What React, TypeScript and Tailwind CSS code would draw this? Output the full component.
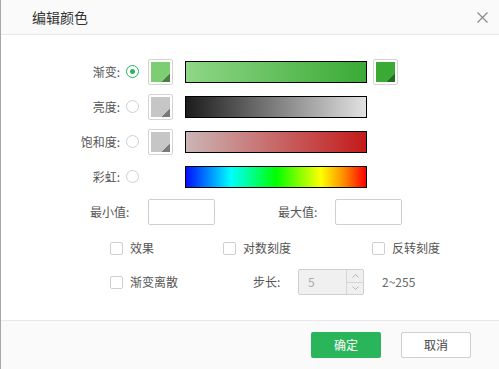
import React from "react";

const font = { fontFamily: '"Noto Sans CJK SC", "Liberation Sans", sans-serif' };

function Radio({ checked }: { checked?: boolean }) {
  return checked ? (
    <div className="ml-[6px] flex h-[13px] w-[13px] items-center justify-center rounded-full border border-[#2ab55b]">
      <div className="h-[5px] w-[5px] rounded-full bg-[#2ab55b]" />
    </div>
  ) : (
    <div className="ml-[6px] h-[13px] w-[13px] rounded-full border border-[#cfcfcf]" />
  );
}

function Swatch({ fill, tri, className }: { fill: string; tri: string; className?: string }) {
  return (
    <div className={"h-[26px] w-[25px] rounded-[2px] border border-[#d4d4d4] bg-white p-[2px] " + (className ?? "")}>
      <div className="relative h-full w-full" style={{ background: fill }}>
        <div
          className="absolute bottom-0 right-0 h-[8px] w-[8px]"
          style={{ background: `linear-gradient(135deg, transparent 50%, ${tri} 50%)` }}
        />
      </div>
    </div>
  );
}

function Bar({ bg }: { bg: string }) {
  return <div className="ml-[12px] h-[22px] w-[182px] border border-black" style={{ background: bg }} />;
}

function Check({ label, className }: { label: string; className?: string }) {
  return (
    <div className={"flex items-center " + (className ?? "")}>
      <div className="h-[13px] w-[13px] rounded-[2px] border border-[#cfcfcf] bg-white" />
      <span className="ml-[7px] text-[12px] text-[#555]">{label}</span>
    </div>
  );
}

export default function App() {
  return (
    <div className="flex h-[369px] w-[499px] flex-col border-l border-[#a6a6a6] bg-white" style={font}>
      <div className="flex h-[35px] items-center border-b border-[#e8e8e8] bg-[#fafafa] pl-[31px] pr-[11px]">
        <span className="text-[14px] text-[#333]">编辑颜色</span>
        <svg className="ml-auto" width="11" height="11" viewBox="0 0 11 11">
          <path d="M0.5 0.5 L10.5 10.5 M10.5 0.5 L0.5 10.5" stroke="#8a8a8a" strokeWidth="1.2" />
        </svg>
      </div>

      <div className="flex flex-1 flex-col pt-[19px]">
        <div className="flex h-[35px] items-center">
          <span className="w-[119px] text-right text-[12px] text-[#555]">渐变:</span>
          <Radio checked />
          <Swatch className="ml-[9px]" fill="#7dce73" tri="#4e7d47" />
          <Bar bg="linear-gradient(to right, #8fd787, #3aaa35)" />
          <Swatch className="ml-[6px]" fill="#3aaa35" tri="#226c1f" />
        </div>
        <div className="flex h-[35px] items-center">
          <span className="w-[119px] text-right text-[12px] text-[#555]">亮度:</span>
          <Radio />
          <Swatch className="ml-[9px]" fill="#c6c6c6" tri="#7a7a7a" />
          <Bar bg="linear-gradient(to right, #1c1c1c, #e2e2e2)" />
        </div>
        <div className="flex h-[35px] items-center">
          <span className="w-[119px] text-right text-[12px] text-[#555]">饱和度:</span>
          <Radio />
          <Swatch className="ml-[9px]" fill="#c6c6c6" tri="#7a7a7a" />
          <Bar bg="linear-gradient(to right, #cbb5b5, #c41a1a)" />
        </div>
        <div className="flex h-[35px] items-center">
          <span className="w-[119px] text-right text-[12px] text-[#555]">彩虹:</span>
          <Radio />
          <div className="ml-[9px] w-[25px]" />
          <Bar bg="linear-gradient(to right, #0010ff 0%, #00ffff 25%, #00ff00 50%, #ffff00 75%, #ff8800 88%, #ff0000 100%)" />
        </div>

        <div className="flex h-[35px] items-center pl-[89px]">
          <span className="w-[58px] text-[12px] text-[#555]">最小值:</span>
          <div className="h-[26px] w-[67px] rounded-[2px] border border-[#cfcfcf] bg-white" />
          <span className="ml-[63px] w-[57px] text-[12px] text-[#555]">最大值:</span>
          <div className="h-[26px] w-[67px] rounded-[2px] border border-[#cfcfcf] bg-white" />
        </div>

        <div className="flex h-[38px] items-center pl-[109px]">
          <Check label="效果" className="w-[113px]" />
          <Check label="对数刻度" className="w-[149px]" />
          <Check label="反转刻度" />
        </div>

        <div className="flex h-[30px] items-center pl-[109px]">
          <Check label="渐变离散" className="w-[143px]" />
          <span className="w-[45px] text-[12px] text-[#555]">步长:</span>
          <div className="flex h-[26px] w-[66px] rounded-[2px] border border-[#d0d0d0] bg-[#f0f0f0]">
            <div className="flex flex-1 items-center pl-[9px] text-[12px] text-[#aaa]">5</div>
            <div className="flex w-[17px] flex-col border-l border-[#d6d6d6]">
              <div className="flex flex-1 items-center justify-center border-b border-[#d6d6d6]">
                <svg width="7" height="4" viewBox="0 0 7 4"><path d="M0.5 3.5 L3.5 0.5 L6.5 3.5" fill="none" stroke="#b5b5b5" strokeWidth="1" /></svg>
              </div>
              <div className="flex flex-1 items-center justify-center">
                <svg width="7" height="4" viewBox="0 0 7 4"><path d="M0.5 0.5 L3.5 3.5 L6.5 0.5" fill="none" stroke="#b5b5b5" strokeWidth="1" /></svg>
              </div>
            </div>
          </div>
          <span className="ml-[18px] text-[12px] text-[#666]">2~255</span>
        </div>
      </div>

      <div className="flex h-[49px] items-start justify-end gap-[20px] border-t border-[#e8e8e8] bg-[#fafafa] pr-[28px] pt-[11px]">
        <div className="flex h-[26px] w-[70px] items-center justify-center rounded-[2px] bg-[#2ab55b] text-[12px] text-white">确定</div>
        <div className="flex h-[26px] w-[70px] items-center justify-center rounded-[2px] border border-[#cfcfcf] bg-white text-[12px] text-[#444]">取消</div>
      </div>
    </div>
  );
}
